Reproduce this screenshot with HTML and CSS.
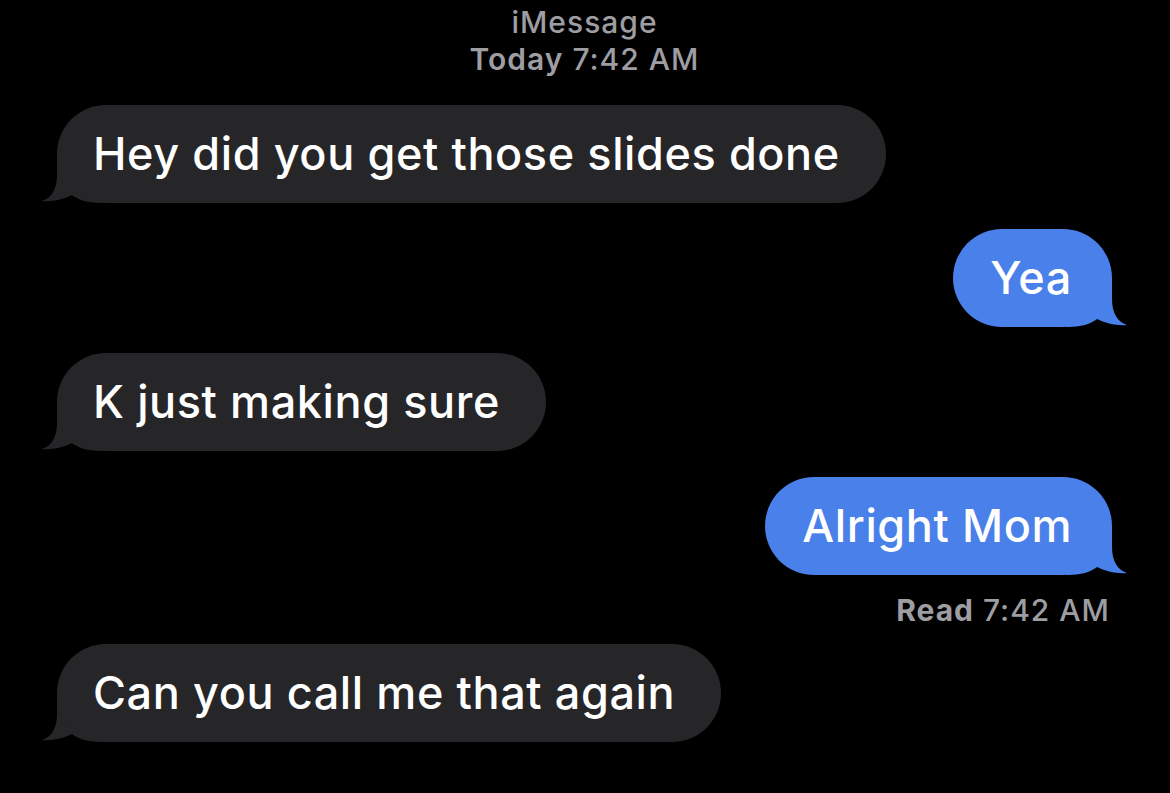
FILE: index.html
```html
<!DOCTYPE html>
<html>
  <head>
    <title>Messages</title>
    <meta charset="UTF-8" />
    <meta name="viewport" content="width=device-width, initial-scale=1.0" />
    <link rel="stylesheet" href="styles.css">
  </head>
  <body>
    <div class="thread">
      <div class="thread-header">
        <div class="service">iMessage</div>
        <div class="stamp"><strong>Today</strong> 7:42 AM</div>
      </div>

      <div class="msg them">
        <div class="bubble">
          Hey did you get those slides done
          <svg class="tail" viewBox="0 0 60 50" width="60" height="50"><path d="M15 0 L15 22 C15 35 10 45 0 48 C10 49 22 46 30 42 C36 47 46 50 60 50 L60 0 Z"/></svg>
        </div>
      </div>

      <div class="msg me">
        <div class="bubble">
          Yea
          <svg class="tail" viewBox="0 0 60 50" width="60" height="50"><path d="M15 0 L15 22 C15 35 10 45 0 48 C10 49 22 46 30 42 C36 47 46 50 60 50 L60 0 Z"/></svg>
        </div>
      </div>

      <div class="msg them">
        <div class="bubble">
          K just making sure
          <svg class="tail" viewBox="0 0 60 50" width="60" height="50"><path d="M15 0 L15 22 C15 35 10 45 0 48 C10 49 22 46 30 42 C36 47 46 50 60 50 L60 0 Z"/></svg>
        </div>
      </div>

      <div class="msg me">
        <div class="bubble">
          Alright Mom
          <svg class="tail" viewBox="0 0 60 50" width="60" height="50"><path d="M15 0 L15 22 C15 35 10 45 0 48 C10 49 22 46 30 42 C36 47 46 50 60 50 L60 0 Z"/></svg>
        </div>
      </div>
      <div class="receipt"><strong>Read</strong> 7:42 AM</div>

      <div class="msg them">
        <div class="bubble">
          Can you call me that again
          <svg class="tail" viewBox="0 0 60 50" width="60" height="50"><path d="M15 0 L15 22 C15 35 10 45 0 48 C10 49 22 46 30 42 C36 47 46 50 60 50 L60 0 Z"/></svg>
        </div>
      </div>
    </div>
  </body>
</html>
```

FILE: styles.css
```css
body {
  margin: 0;
  background-color: #000;
  font-family: Inter, "Noto Sans", sans-serif;
  color: #fff;
}
.thread {
  display: flex;
  flex-direction: column;
  padding: 4px 58px 0 57px;
}
.thread-header {
  text-align: center;
  color: #9d9da2;
  font-size: 30px;
  line-height: 37px;
  font-weight: 500;
  letter-spacing: 1px;
  margin-bottom: 27px;
}
.thread-header strong {
  font-weight: 600;
}
.msg {
  display: flex;
  margin-bottom: 26px;
}
.msg.them {
  justify-content: flex-start;
}
.msg.me {
  justify-content: flex-end;
}
.bubble {
  position: relative;
  font-size: 45px;
  line-height: 54px;
  font-weight: 530;
  letter-spacing: 0.6px;
  padding: 22px 46px 22px 36px;
  border-radius: 49px;
  white-space: nowrap;
}
.them .bubble {
  background-color: #262629;
}
.me .bubble {
  background-color: #4a80ea;
  padding: 22px 40px 22px 37px;
}
.tail {
  position: absolute;
  z-index: -1;
  bottom: 0;
  display: block;
}
.them .tail {
  left: -15px;
  fill: #262629;
}
.me .tail {
  right: -15px;
  fill: #4a80ea;
  transform: scaleX(-1);
}
.receipt {
  text-align: right;
  color: #9d9da2;
  font-size: 30px;
  line-height: 36px;
  font-weight: 500;
  letter-spacing: 1px;
  margin: -9px 2px 16px 0;
}
.receipt strong {
  font-weight: 700;
}
```
